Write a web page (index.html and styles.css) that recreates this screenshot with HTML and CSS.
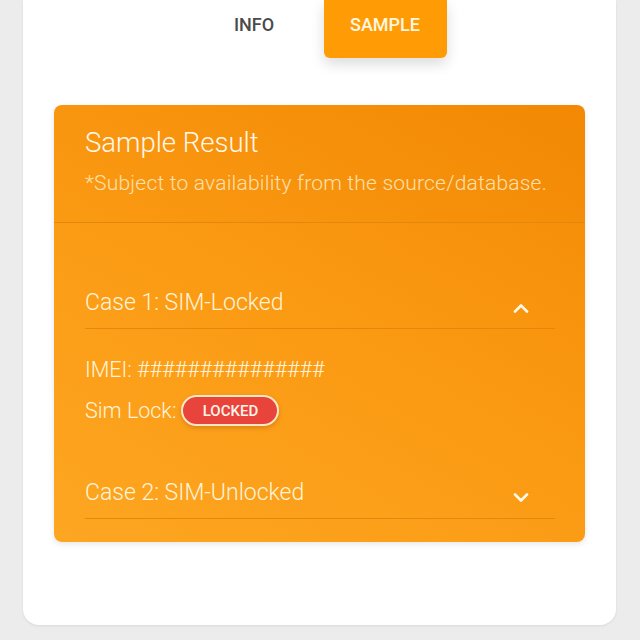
FILE: index.html
```html
<!DOCTYPE html>
<html>
<head>
<meta charset="utf-8">
<link rel="stylesheet" href="styles.css">
</head>
<body>
<div class="card">
  <div class="tabs">
    <div class="tab">INFO</div>
    <div class="tab active">SAMPLE</div>
  </div>
  <div class="panel">
    <div class="panel-head">
      <h2 class="title">Sample Result</h2>
      <p class="note">*Subject to availability from the source/database.</p>
    </div>
    <div class="panel-body">
      <div class="acc-head">
        <span class="acc-title">Case 1: SIM-Locked</span>
        <svg class="chev" width="16" height="10" viewBox="0 0 16 10"><path d="M2 8.5 L8 2.5 L14 8.5" fill="none" stroke="#fff8e6" stroke-width="2.6" stroke-linecap="round" stroke-linejoin="round"/></svg>
      </div>
      <div class="acc-content">
        <div class="line">IMEI: ###############</div>
        <div class="line lock-row">Sim Lock: <span class="badge">LOCKED</span></div>
      </div>
      <div class="acc-head">
        <span class="acc-title">Case 2: SIM-Unlocked</span>
        <svg class="chev" width="16" height="10" viewBox="0 0 16 10"><path d="M2 1.5 L8 7.5 L14 1.5" fill="none" stroke="#fff8e6" stroke-width="2.6" stroke-linecap="round" stroke-linejoin="round"/></svg>
      </div>
    </div>
  </div>
</div>
</body>
</html>
```
FILE: styles.css
```css
* { box-sizing: border-box; }
html, body { margin: 0; padding: 0; }
body {
  background: #ececec;
  font-family: Roboto, "Liberation Sans", sans-serif;
  height: 640px;
  overflow: hidden;
}
.card {
  margin: 0 24px 0 23px;
  height: 625px;
  background: #fff;
  border-radius: 0 0 16px 16px;
  box-shadow: 0 1px 3px rgba(0,0,0,0.08);
  padding: 0 31px;
}
.tabs {
  display: flex;
  justify-content: center;
  gap: 8px;
  height: 58px;
}
.tab {
  width: 123px;
  height: 58px;
  display: flex;
  align-items: flex-start;
  justify-content: center;
  padding-top: 14px;
  font-size: 18px;
  font-weight: 500;
  color: #4a4a4a;
}
.tab.active {
  background: #ff9c05;
  color: #fff6e0;
  border-radius: 0 0 6px 6px;
  box-shadow: 0 6px 14px rgba(0,0,0,0.14);
}
.panel {
  margin-top: 47px;
  border-radius: 8px;
  background: linear-gradient(30deg, #fda622 0%, #fb9a13 50%, #f38a05 100%);
  box-shadow: 0 2px 6px rgba(0,0,0,0.1);
  overflow: hidden;
  color: #fff4da;
}
.panel-head {
  height: 118px;
  padding: 21px 32px 0 31px;
  border-bottom: 1px solid #e5870a;
  background: rgba(230,120,0,0.05);
}
.title {
  margin: 0;
  font-size: 27.5px;
  font-weight: 300;
  line-height: 34px;
  color: #fff8ea;
}
.note {
  margin: 10px 0 0 0;
  font-size: 21px;
  letter-spacing: 0.2px;
  font-weight: 300;
  line-height: 26px;
  color: #fde0ad;
  white-space: nowrap;
}
.panel-body {
  padding: 53px 30px 23px 31px;
}
.acc-head {
  height: 53px;
  display: flex;
  align-items: center;
  justify-content: space-between;
  border-bottom: 1px solid #e5870a;
}
.acc-title {
  font-size: 23px;
  font-weight: 300;
  line-height: 28px;
  margin-top: 2px;
}
.chev {
  margin-top: 12px;
  margin-right: 26px;
}
.acc-content {
  padding: 27px 0 40px 0;
}
.line {
  font-size: 21.5px;
  font-weight: 300;
  line-height: 28px;
}
.lock-row {
  margin-top: 11px;
  display: flex;
  align-items: center;
  gap: 5px;
  height: 31px;
}
.badge {
  display: inline-flex;
  align-items: center;
  justify-content: center;
  width: 98px;
  height: 31px;
  border-radius: 16px;
  background: #e8443b;
  border: 2px solid #fde8c2;
  color: #fff4ea;
  font-size: 15px;
  font-weight: 500;
  box-shadow: 0 2px 4px rgba(120,50,0,0.25);
}
```
